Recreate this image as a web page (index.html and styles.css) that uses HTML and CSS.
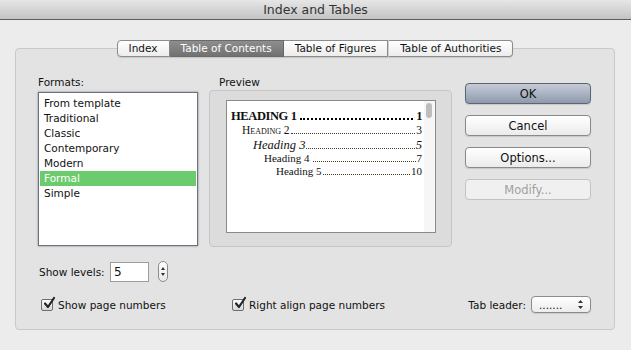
FILE: index.html
```html
<!DOCTYPE html>
<html>
<head>
  <meta charset="UTF-8">
  <title>Index and Tables</title>
  <link rel="stylesheet" href="styles.css">
</head>
<body>
  <div class="titlebar">Index and Tables</div>

  <div class="dialog">
    <!-- Tabs -->
    <div class="tabs">
      <span class="tab first">Index</span>
      <span class="tab selected">Table of Contents</span>
      <span class="tab">Table of Figures</span>
      <span class="tab last">Table of Authorities</span>
    </div>

    <div class="panel">
      <div class="top">
        <!-- Formats -->
        <div class="col-formats">
          <div class="label">Formats:</div>
          <div class="list">
            <div class="item">From template</div>
            <div class="item">Traditional</div>
            <div class="item">Classic</div>
            <div class="item">Contemporary</div>
            <div class="item">Modern</div>
            <div class="item selected">Formal</div>
            <div class="item">Simple</div>
          </div>
        </div>

        <!-- Preview -->
        <div class="col-preview">
          <div class="label preview-label">Preview</div>
          <div class="preview-box">
            <div class="doc">
              <div class="entries">
                <div class="entry h1"><span>HEADING 1</span><span class="leader"></span><span>1</span></div>
                <div class="entry h2"><span>Heading 2</span><span class="leader"></span><span>3</span></div>
                <div class="entry h3"><span>Heading 3</span><span class="leader"></span><span>5</span></div>
                <div class="entry h4"><span>Heading 4</span><span class="leader"></span><span>7</span></div>
                <div class="entry h5"><span>Heading 5</span><span class="leader"></span><span>10</span></div>
              </div>
              <div class="scroll"><div class="thumb"></div></div>
            </div>
          </div>
        </div>

        <!-- Buttons -->
        <div class="col-buttons">
          <button class="btn default">OK</button>
          <button class="btn">Cancel</button>
          <button class="btn">Options...</button>
          <button class="btn disabled">Modify...</button>
        </div>
      </div>

      <!-- Show levels -->
      <div class="levels">
        <span class="levels-label">Show levels:</span>
        <span class="field">5</span>
        <span class="stepper">
          <svg width="8" height="17" viewBox="0 0 8 17">
            <path d="M4 4 L6 7 L2 7 Z" fill="#333"/>
            <path d="M4 13 L6 10 L2 10 Z" fill="#333"/>
          </svg>
        </span>
      </div>

      <!-- Options row -->
      <div class="options">
        <label class="checkline first-check">
          <span class="check">
            <svg width="14" height="14" viewBox="0 0 14 14">
              <path d="M3 6.5 L6 10 L12 1" stroke="#1e2630" stroke-width="2.2" fill="none" stroke-linecap="round" stroke-linejoin="round"/>
            </svg>
          </span>
          Show page numbers
        </label>
        <label class="checkline">
          <span class="check">
            <svg width="14" height="14" viewBox="0 0 14 14">
              <path d="M3 6.5 L6 10 L12 1" stroke="#1e2630" stroke-width="2.2" fill="none" stroke-linecap="round" stroke-linejoin="round"/>
            </svg>
          </span>
          Right align page numbers
        </label>
        <span class="leader-pick">
          Tab leader:
          <span class="popup">
            <span>.......</span>
            <svg width="7" height="11" viewBox="0 0 7 11">
              <path d="M3.5 1 L6 4 L1 4 Z" fill="#333"/>
              <path d="M3.5 10 L6 7 L1 7 Z" fill="#333"/>
            </svg>
          </span>
        </span>
      </div>
    </div>
  </div>
</body>
</html>
```

FILE: styles.css
```css
* {
  box-sizing: border-box;
}

html, body {
  margin: 0;
  padding: 0;
  background: #ececec;
  font-family: "DejaVu Sans", "Liberation Sans", sans-serif;
  font-size: 10.5px;
  color: #111;
}

.titlebar {
  height: 20px;
  line-height: 19px;
  text-align: center;
  font-size: 12.5px;
  color: #333;
  background: linear-gradient(#e6e6e6, #c4c4c4);
  border-bottom: 1px solid #5e5e5e;
}

.dialog {
  padding: 20px 16px 0 15px;
}

/* Tabs */
.tabs {
  display: flex;
  justify-content: center;
  position: relative;
  z-index: 1;
  height: 17px;
}

.tab {
  height: 17px;
  line-height: 15px;
  padding: 0 11px;
  border: 1px solid #8c8c8c;
  border-left: none;
  background: linear-gradient(#ffffff, #ececec);
  color: #111;
  box-shadow: 0 1px 1px rgba(0, 0, 0, 0.12);
}

.tab.first {
  border-left: 1px solid #8c8c8c;
  border-radius: 4px 0 0 4px;
}

.tab.last {
  border-radius: 0 4px 4px 0;
  border-left: 1px solid #d0d0d0;
}

.tab.selected {
  background: linear-gradient(#8e8e8e, #717171);
  border-color: #6a6a6a;
  color: #fff;
}

.panel {
  margin-top: -9px;
  height: 282px;
  background: #e3e3e3;
  border: 1px solid #c9c9c9;
  border-radius: 4px;
  padding: 26px 22px 0 22px;
}

.top {
  display: flex;
  height: 172px;
}

.label {
  height: 14px;
  line-height: 14px;
}

/* Formats list */
.col-formats {
  width: 160px;
}

.list {
  margin-top: 3px;
  height: 154px;
  background: #fff;
  border: 1px solid #6c727c;
  box-shadow: 0 0 2px rgba(40, 50, 70, 0.55);
  padding: 3px 1px;
}

.item {
  height: 15px;
  line-height: 15px;
  padding-left: 4px;
}

.item.selected {
  background: #6ccb6c;
  color: #fff;
}

/* Preview */
.col-preview {
  margin-left: 11px;
  width: 243px;
}

.preview-label {
  padding-left: 10px;
}

.preview-box {
  margin-top: 1px;
  height: 157px;
  background: #dcdcdc;
  border: 1px solid #c6c6c6;
  border-radius: 4px;
  padding: 9px 15px 0 16px;
}

.doc {
  height: 133px;
  background: #fff;
  border: 1px solid #8a8a8a;
  display: flex;
}

.entries {
  flex: 1;
  padding: 8px 2px 0 4px;
  font-family: "Liberation Serif", "DejaVu Serif", serif;
  color: #111;
}

.entry {
  display: flex;
  align-items: baseline;
  white-space: nowrap;
}

.leader {
  flex: 1;
  border-bottom: 1px dotted #4a3a2a;
  margin: 0 1px;
}

.h1 {
  font-size: 12.5px;
  letter-spacing: -0.4px;
  font-weight: bold;
  height: 15px;
}

.h1 .leader {
  border-bottom: 2px dotted #000;
  margin: 0 3px;
}

.h2 {
  padding-left: 11px;
  font-size: 11.5px;
  font-variant: small-caps;
  height: 14px;
}

.h3 {
  padding-left: 22px;
  font-size: 12.5px;
  font-style: italic;
  height: 14px;
}

.h4 {
  padding-left: 33px;
  font-size: 11px;
  height: 13px;
}

.h4 .leader {
  margin-left: 3px;
}

.h5 {
  padding-left: 45px;
  font-size: 11px;
  height: 13px;
}

.scroll {
  width: 11px;
  background: #f6f6f6;
  padding: 2px 0 0 2px;
}

.thumb {
  width: 6px;
  height: 15px;
  border-radius: 3px;
  background: #bdbdbd;
}

/* Buttons */
.col-buttons {
  margin-left: 13px;
  width: 126px;
  display: flex;
  flex-direction: column;
  gap: 11px;
  padding-top: 8px;
}

.btn {
  height: 21px;
  font-family: inherit;
  font-size: 11.5px;
  color: #111;
  background: linear-gradient(#ffffff, #ebebeb);
  border: 1px solid #8a8a8a;
  border-radius: 4px;
  box-shadow: 0 1px 1px rgba(0, 0, 0, 0.12);
  padding: 0;
}

.btn.default {
  background: linear-gradient(#c6ccd7, #8f9aae);
  border-color: #5d6474;
}

.btn.disabled {
  color: #a0a0a0;
  background: #f0f0f0;
  border-color: #c2c2c2;
  box-shadow: none;
}

/* Show levels */
.levels {
  margin-top: 14px;
  height: 21px;
  display: flex;
  align-items: center;
  padding-left: 1px;
}

.levels-label {
  width: 71px;
}

.field {
  width: 39px;
  height: 20px;
  line-height: 18px;
  padding-left: 3px;
  font-size: 12px;
  background: #fff;
  border: 1px solid #9c9c9c;
}

.stepper {
  margin-left: 9px;
  width: 10px;
  height: 21px;
  border: 1px solid #8c8c8c;
  border-radius: 5px;
  background: linear-gradient(#ffffff, #e8e8e8);
  display: flex;
  align-items: center;
  justify-content: center;
}

/* Options row */
.options {
  margin-top: 14px;
  height: 17px;
  display: flex;
  align-items: center;
}

.checkline {
  display: flex;
  align-items: center;
  gap: 5px;
}

.first-check {
  margin-left: 3px;
  width: 191px;
}

.check {
  width: 12px;
  height: 12px;
  border: 1px solid #6e6e6e;
  border-radius: 2px;
  background: linear-gradient(#ffffff, #d6d6d6);
  display: flex;
  align-items: flex-end;
}

.check svg {
  margin: 0 0 -1px 0;
  overflow: visible;
}

.leader-pick {
  margin-left: auto;
  margin-right: 1px;
  display: flex;
  align-items: center;
  gap: 5px;
}

.popup {
  width: 60px;
  height: 17px;
  border: 1px solid #8c8c8c;
  border-radius: 4px;
  background: linear-gradient(#ffffff, #ececec);
  box-shadow: 0 1px 1px rgba(0, 0, 0, 0.1);
  display: flex;
  align-items: center;
  justify-content: space-between;
  padding: 0 6px 0 7px;
  line-height: 14px;
}
```
